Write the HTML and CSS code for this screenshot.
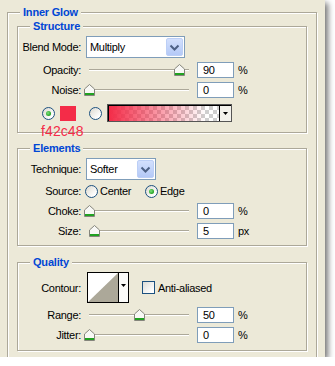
FILE: index.html
```html
<!DOCTYPE html>
<html>
<head>
<meta charset="utf-8">
<link rel="stylesheet" href="styles.css">
</head>
<body>
<div class="panel">
  <div class="group outer">
    <div class="legend">Inner Glow</div>

    <div class="group sub structure">
      <div class="legend">Structure</div>
      <div class="row row-select">
        <span class="label">Blend Mode:</span>
        <div class="select blend">
          <span class="val">Multiply</span>
          <span class="drop"><svg width="11" height="7" viewBox="0 0 11 7"><path d="M1.5 1.5 L5.5 5.5 L9.5 1.5" fill="none" stroke="#4d6185" stroke-width="2"/></svg></span>
        </div>
      </div>
      <div class="row first">
        <span class="label">Opacity:</span>
        <div class="slider"><span class="thumb" style="left:90%"><svg width="11" height="12" viewBox="0 0 11 12"><path d="M0.5 5 L5.5 0.5 L10.5 5 V11.5 H0.5Z" fill="#f8f8f5" stroke="#85857c"/><rect x="1" y="9" width="9" height="2" fill="#21a121"/></svg></span></div>
        <div class="input">90</div><span class="unit">%</span>
      </div>
      <div class="row">
        <span class="label">Noise:</span>
        <div class="slider"><span class="thumb" style="left:0%"><svg width="11" height="12" viewBox="0 0 11 12"><path d="M0.5 5 L5.5 0.5 L10.5 5 V11.5 H0.5Z" fill="#f8f8f5" stroke="#85857c"/><rect x="1" y="9" width="9" height="2" fill="#21a121"/></svg></span></div>
        <div class="input">0</div><span class="unit">%</span>
      </div>
      <div class="row color-row">
        <span class="radio checked"></span>
        <span class="swatch"></span>
        <span class="radio radio-gap"></span>
        <div class="gradient">
          <span class="grad-fill"></span>
          <span class="grad-drop"><svg width="5" height="3" viewBox="0 0 5 3"><path d="M0 0 H5 L2.5 3Z" fill="#000"/></svg></span>
        </div>
      </div>
    </div>

    <div class="group sub elements">
      <div class="legend">Elements</div>
      <div class="row row-select">
        <span class="label">Technique:</span>
        <div class="select technique">
          <span class="val">Softer</span>
          <span class="drop"><svg width="11" height="7" viewBox="0 0 11 7"><path d="M1.5 1.5 L5.5 5.5 L9.5 1.5" fill="none" stroke="#4d6185" stroke-width="2"/></svg></span>
        </div>
      </div>
      <div class="row source">
        <span class="label">Source:</span>
        <span class="opt opt-center"><span class="radio"></span><span class="opt-text">Center</span></span>
        <span class="opt"><span class="radio checked"></span><span class="opt-text">Edge</span></span>
      </div>
      <div class="row">
        <span class="label">Choke:</span>
        <div class="slider"><span class="thumb" style="left:0%"><svg width="11" height="12" viewBox="0 0 11 12"><path d="M0.5 5 L5.5 0.5 L10.5 5 V11.5 H0.5Z" fill="#f8f8f5" stroke="#85857c"/><rect x="1" y="9" width="9" height="2" fill="#21a121"/></svg></span></div>
        <div class="input">0</div><span class="unit">%</span>
      </div>
      <div class="row">
        <span class="label">Size:</span>
        <div class="slider"><span class="thumb" style="left:5%"><svg width="11" height="12" viewBox="0 0 11 12"><path d="M0.5 5 L5.5 0.5 L10.5 5 V11.5 H0.5Z" fill="#f8f8f5" stroke="#85857c"/><rect x="1" y="9" width="9" height="2" fill="#21a121"/></svg></span></div>
        <div class="input">5</div><span class="unit">px</span>
      </div>
    </div>

    <div class="group sub quality">
      <div class="legend">Quality</div>
      <div class="row contour-row">
        <span class="label">Contour:</span>
        <div class="contour">
          <span class="contour-preview"><svg width="30" height="29" viewBox="0 0 30 29"><rect width="30" height="29" fill="#fff"/><path d="M30 0 L30 29 L0 29Z" fill="#aca899"/></svg></span>
          <span class="contour-drop"><svg width="5" height="3" viewBox="0 0 5 3"><path d="M0 0 H5 L2.5 3Z" fill="#000"/></svg></span>
        </div>
        <span class="checkbox"></span>
        <span class="check-text">Anti-aliased</span>
      </div>
      <div class="row range-row">
        <span class="label">Range:</span>
        <div class="slider"><span class="thumb" style="left:50%"><svg width="11" height="12" viewBox="0 0 11 12"><path d="M0.5 5 L5.5 0.5 L10.5 5 V11.5 H0.5Z" fill="#f8f8f5" stroke="#85857c"/><rect x="1" y="9" width="9" height="2" fill="#21a121"/></svg></span></div>
        <div class="input">50</div><span class="unit">%</span>
      </div>
      <div class="row">
        <span class="label">Jitter:</span>
        <div class="slider"><span class="thumb" style="left:0%"><svg width="11" height="12" viewBox="0 0 11 12"><path d="M0.5 5 L5.5 0.5 L10.5 5 V11.5 H0.5Z" fill="#f8f8f5" stroke="#85857c"/><rect x="1" y="9" width="9" height="2" fill="#21a121"/></svg></span></div>
        <div class="input">0</div><span class="unit">%</span>
      </div>
    </div>
  </div>
  <div class="annotation">f42c48</div>
</div>
</body>
</html>
```

FILE: styles.css
```css
* { box-sizing: border-box; }

body {
  margin: 0;
  background: #ffffff;
  font-family: "Liberation Sans", Arial, sans-serif;
  font-size: 11px;
  letter-spacing: -0.3px;
  color: #000;
}

.panel {
  position: relative;
  width: 325px;
  height: 357px;
  background: #ece9d8;
  overflow: hidden;
  padding: 12px 0 0 7px;
  box-shadow: 3px 3px 6px rgba(0, 0, 0, 0.55);
}

.group {
  position: relative;
  border: 1px solid #aca899;
  box-shadow: 1px 1px 0 #fff, inset 1px 1px 0 #fff;
}

.outer {
  width: 310px;
  height: 360px;
  padding: 13px 0 0 9px;
}

.sub {
  width: 290px;
  padding-top: 9px;
}

.structure { height: 107px; }
.elements { height: 98px; margin-top: 15px; }
.quality { height: 89px; margin-top: 16px; }

.legend {
  position: absolute;
  top: -7px;
  left: 12px;
  padding: 0 3px;
  background: #ece9d8;
  color: #0046d5;
  font-weight: bold;
  line-height: 13px;
  letter-spacing: -0.2px;
}

.row {
  display: flex;
  align-items: center;
  height: 20px;
}

.row-select { height: 22px; }
.row.first { margin-top: 2px; }
.source { margin-top: 1px; }

.label {
  flex: none;
  width: 63px;
  text-align: right;
}

.select {
  display: flex;
  align-items: stretch;
  height: 22px;
  margin-left: 5px;
  padding: 1px;
  border: 1px solid #7f9db9;
  background: #fff;
}
.select.blend { width: 99px; }
.select.technique { width: 70px; }

.select .val {
  flex: 1;
  padding-left: 2px;
  line-height: 18px;
}

.drop {
  flex: none;
  display: flex;
  align-items: center;
  justify-content: center;
  width: 17px;
  border: 1px solid #bccff6;
  border-radius: 2px;
  background: linear-gradient(to bottom, #d3e0fd, #b4c9f7);
}

.slider {
  position: relative;
  flex: none;
  width: 100px;
  height: 2px;
  margin-left: 8px;
  border-top: 1px solid #aca899;
  background: #fff;
}

.thumb {
  position: absolute;
  top: -6px;
  margin-left: -5px;
  width: 11px;
  height: 12px;
}
.thumb svg { display: block; }

.input {
  flex: none;
  width: 37px;
  height: 16px;
  margin-left: 8px;
  padding-left: 5px;
  border: 1px solid #7f9db9;
  background: #fff;
  line-height: 14px;
}

.unit { margin-left: 4px; }

.color-row {
  height: 18px;
  margin-top: 4px;
  padding-left: 24px;
}

.radio {
  flex: none;
  position: relative;
  width: 13px;
  height: 13px;
  border: 1px solid #1c5180;
  border-radius: 50%;
  background: linear-gradient(135deg, #dcd9cf, #ffffff 80%);
}
.radio.checked::after {
  content: "";
  position: absolute;
  left: 3px;
  top: 3px;
  width: 5px;
  height: 5px;
  border-radius: 50%;
  background: radial-gradient(circle at 40% 40%, #7fe07f, #21a121 70%);
}

.swatch {
  flex: none;
  width: 16px;
  height: 15px;
  margin-left: 5px;
  background: #f42c48;
}

.radio-gap { margin-left: 13px; }

.gradient {
  flex: none;
  display: flex;
  width: 125px;
  height: 18px;
  margin-left: 5px;
  border: 1px solid #555;
  box-shadow: inset 1px 1px 0 #000;
  padding: 1px 0 0 1px;
  background: #fff;
}

.grad-fill {
  flex: 1;
  background:
    linear-gradient(to right, #f42c48 0%, rgba(244, 44, 72, 0.6) 35%, rgba(244, 44, 72, 0) 88%),
    conic-gradient(#cfcfcf 25%, #ffffff 0 50%, #cfcfcf 0 75%, #ffffff 0) 0 0 / 8px 8px;
}

.grad-drop {
  flex: none;
  display: flex;
  align-items: center;
  justify-content: center;
  width: 12px;
  border-left: 1px solid #000;
  background: #f3f2ec;
}

.opt {
  display: flex;
  align-items: center;
}
.opt-center {
  width: 60px;
  margin-left: 4px;
}
.opt-text { margin-left: 2px; }

.contour-row { height: 31px; }
.range-row { margin-top: 2px; }

.contour {
  flex: none;
  display: flex;
  width: 42px;
  height: 31px;
  margin-left: 6px;
  border: 1px solid #000;
  background: #fff;
}
.contour-preview svg { display: block; }
.contour-drop {
  flex: 1;
  display: flex;
  justify-content: center;
  padding-top: 11px;
  border-left: 1px solid #000;
  background: #fbfbf9;
}
.contour-drop svg { display: block; }

.checkbox {
  flex: none;
  width: 13px;
  height: 13px;
  margin-left: 13px;
  border: 1px solid #1c5180;
  background: linear-gradient(135deg, #dcdcd7, #ffffff 85%);
}

.check-text { margin-left: 3px; }

.annotation {
  position: absolute;
  left: 41px;
  top: 123px;
  font-size: 14px;
  line-height: 16px;
  letter-spacing: 0.1px;
  color: #f42c48;
}
```
